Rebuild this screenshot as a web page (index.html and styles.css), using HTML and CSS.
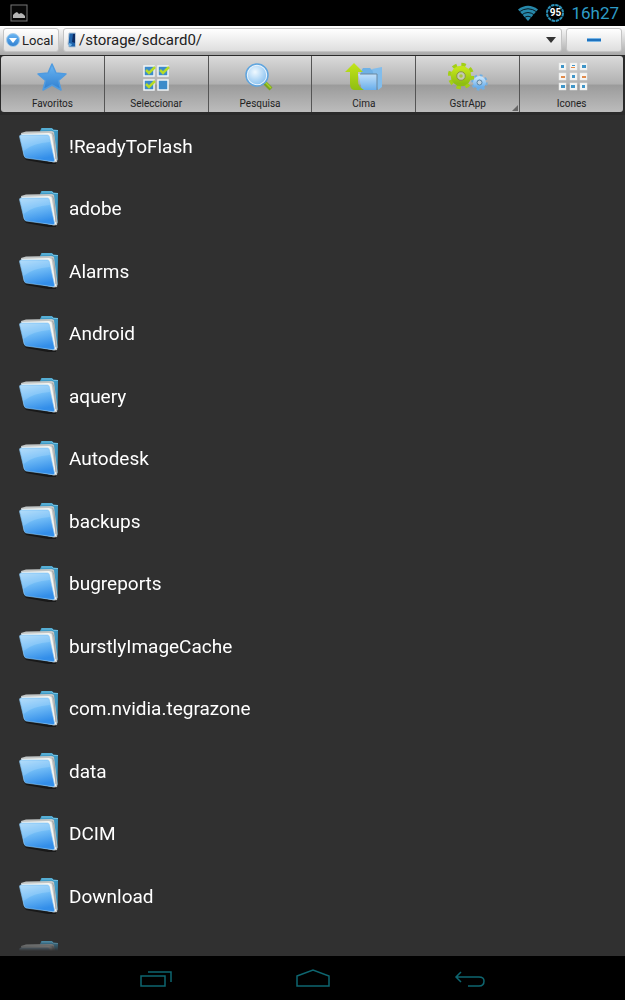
FILE: index.html
```
<!DOCTYPE html>
<html lang="pt">
<head>
  <meta charset="UTF-8">
  <meta name="viewport" content="width=device-width, initial-scale=1">
  <title>/storage/sdcard0/</title>
  <link rel="stylesheet" href="styles.css">
</head>
<body>

  <!-- shared gradients and the folder icon -->
  <svg class="defs" width="0" height="0" aria-hidden="true">
    <defs>
      <linearGradient id="blue" x1="0" y1="0" x2="0" y2="1">
        <stop offset="0" stop-color="#6bb6f3"/>
        <stop offset="1" stop-color="#2f7fd0"/>
      </linearGradient>
      <linearGradient id="light" x1="0" y1="0" x2="0" y2="1">
        <stop offset="0" stop-color="#c3e1fa"/>
        <stop offset="1" stop-color="#69aeeb"/>
      </linearGradient>
      <linearGradient id="green" x1="0" y1="0" x2="0" y2="1">
        <stop offset="0" stop-color="#c3e51a"/>
        <stop offset="1" stop-color="#8fbe12"/>
      </linearGradient>
      <linearGradient id="front" x1="0" y1="0" x2="0.3" y2="1">
        <stop offset="0" stop-color="#a9d8fa"/>
        <stop offset="0.45" stop-color="#74bef7"/>
        <stop offset="1" stop-color="#338ee9"/>
      </linearGradient>
      <radialGradient id="lens" cx="0.4" cy="0.35" r="0.7">
        <stop offset="0" stop-color="#f0f9ff"/>
        <stop offset="1" stop-color="#86c0f0"/>
      </radialGradient>
    </defs>
    <symbol id="folder" viewBox="0 0 42 38">
      <path d="M5 29 L38 35 L38 37 L30 37 L8 33z" fill="#181818"/>
      <path d="M22 4 L23.500 1 L34 1 L35.500 2.500 L40 3 L39.500 33 L34 33z" fill="#3f9bc6"/>
      <path d="M23.500 2 H34 L35.500 3.500 H40" fill="none" stroke="#6fc0e2"/>
      <path d="M3 6 L8 4.500 L34 4 L36 5 L39.500 32 L39 35 L36 35.500 L6 29z" fill="#c2c6c6"/>
      <path d="M3 7 L31 6 L33.500 7 L38 34 L35 34.500z" fill="#f6f6f2"/>
      <path d="M34.500 6 L36 10 L38 32" fill="none" stroke="#a5a5a5"/>
      <path d="M1.500 9.500 Q1.500 8 3 8 L29.500 8 Q31 8 31.300 9.500 L36.500 33 Q36.500 35 35 34.700 L8 31 Q6.500 30.500 6.200 29z" fill="url(#front)" stroke="#8ccaf6" stroke-width="0.6"/>
      <path d="M2.500 9 L30.500 9 L32 15 Q15 16 5.500 24z" fill="#fff" opacity="0.14"/>
    </symbol>
  </svg>

  <div class="screen">
    <header class="status">
      <svg width="18" height="18" viewBox="0 0 18 18" aria-hidden="true">
        <rect x="1" y="1" width="16" height="16" fill="#080808" stroke="#777"/>
        <path d="M3 14 V11 L5 9 L7 8 L9 10 L11 9 L13 10 L15 12 V14z" fill="#b5b5b5"/>
      </svg>
      <div class="status-right">
        <svg width="22" height="18" viewBox="0 0 22 18" aria-hidden="true">
          <path d="M1 5.500 Q11 -2 21 5.500 L11 17z" fill="#2788aa"/>
          <path d="M2 8 Q11 1.500 20 8 M4.500 11 Q11 6 17.500 11 M7 14 Q11 10.500 15 14" fill="none" stroke="#041015" stroke-width="0.9"/>
        </svg>
        <span class="battery">
          <svg class="battery-ring" width="20" height="20" viewBox="0 0 20 20" aria-hidden="true">
            <circle cx="10" cy="10" r="8" fill="none" stroke="#2b93bb" stroke-width="2" stroke-dasharray="3.400 0.790"/>
          </svg>
          95
        </span>
        <span class="clock">16h27</span>
      </div>
    </header>

    <div class="pathbar">
      <button class="local" type="button">
        <svg width="14" height="14" viewBox="0 0 14 14" aria-hidden="true">
          <circle cx="7" cy="7" r="6.500" fill="url(#blue)" stroke="#a7cdea"/>
          <path d="M3 5 H11 L7 10z" fill="#fff"/>
        </svg>
        Local
      </button>
      <button class="path" type="button">
        <svg width="10" height="16" viewBox="0 0 10 16" aria-hidden="true">
          <path d="M2 1 H8.500 V15 H2 L1 12z" fill="#1f63ab" stroke="#b9c9d8"/>
          <path d="M6 2 H8 V11 L5 10z" fill="#0c2b63"/>
          <path d="M2 11 L5 12 L4 14 H2z" fill="#69b2e8"/>
        </svg>
        <span class="path-text">/storage/sdcard0/</span>
        <svg width="10" height="7" viewBox="0 0 10 7" aria-hidden="true"><path d="M0 0 H10 L5 6z" fill="#333"/></svg>
      </button>
      <button class="minus" type="button" aria-label="Menos">
        <svg width="14" height="4" viewBox="0 0 14 4" aria-hidden="true">
          <rect width="14" height="4" fill="#79b6e6"/>
          <rect y="1" width="14" height="2" fill="#1f72bd"/>
        </svg>
      </button>
    </div>

    <nav class="toolbar">
      <button type="button">
        <svg class="tool-icon" viewBox="0 0 36 32" aria-hidden="true">
          <path d="M18 2 L22 11 L32 12 L24.500 18.500 L27 28 L18 23 L9 28 L11.500 18.500 L4 12 L14 11z" fill="url(#blue)" stroke="#4f9be0" stroke-width="1.500" stroke-linejoin="round"/>
        </svg>
        Favoritos
      </button>
      <button type="button">
        <svg class="tool-icon" viewBox="0 0 36 32" aria-hidden="true">
          <g fill="#3c8bca" stroke="#f1f5f7" stroke-width="1.500">
            <rect x="6" y="4" width="10" height="10"/>
            <rect x="20" y="4" width="10" height="10"/>
            <rect x="6" y="18" width="10" height="10"/>
            <rect x="20" y="18" width="10" height="10"/>
          </g>
          <path d="M8 8 L11 11 L17 5 M22 8 L25 11 L31 5 M8 22 L11 25 L17 19" fill="none" stroke="#b5db27" stroke-width="2.500"/>
        </svg>
        Seleccionar
      </button>
      <button type="button">
        <svg class="tool-icon" viewBox="0 0 36 32" aria-hidden="true">
          <path d="M21 19 L29 27" stroke="#7aa51c" stroke-width="4"/>
          <path d="M22 19 L29 26" stroke="#a7cf2c" stroke-width="1.500"/>
          <circle cx="15" cy="13" r="10" fill="url(#lens)" stroke="#eaf5fd" stroke-width="1.500"/>
          <circle cx="15" cy="13" r="11" fill="none" stroke="#5fa5df" stroke-width="1.500"/>
        </svg>
        Pesquisa
      </button>
      <button type="button">
        <svg class="tool-icon tool-icon-wide" viewBox="0 0 40 32" aria-hidden="true">
          <path d="M17 9 L19 6 H26 L28 8 H36 V24 H17z" fill="#6fb1e6"/>
          <path d="M28 7 L38 5 V25 L34 28z" fill="#82bdec"/>
          <path d="M14 12 H33 V28 H18z" fill="url(#light)"/>
          <path d="M16 12 H33 V28" fill="none" stroke="#69879f"/>
          <path d="M10 1 L19 10 H14 V19 Q14 25 20 28 H11 Q6 28 6 22 V10 H1z" fill="url(#green)"/>
        </svg>
        Cima
      </button>
      <button class="has-menu" type="button">
        <svg class="tool-icon tool-icon-wide" viewBox="0 0 40 32" aria-hidden="true">
          <circle cx="13" cy="14" r="11.500" fill="none" stroke="#a3cf16" stroke-width="3.500" stroke-dasharray="4.500 4.530"/>
          <circle cx="13" cy="14" r="7.300" fill="none" stroke="url(#green)" stroke-width="6"/>
          <circle cx="13" cy="14" r="4.300" fill="#c4c9b4" stroke="#8a963f"/>
          <circle cx="13" cy="14" r="1.800" fill="#a7c83c"/>
          <circle cx="31.500" cy="20.500" r="7" fill="none" stroke="#70aee2" stroke-width="2.500" stroke-dasharray="2.750 2.750"/>
          <circle cx="31.500" cy="20.500" r="4.500" fill="none" stroke="url(#light)" stroke-width="4"/>
          <circle cx="31.500" cy="20.500" r="2.500" fill="#c3d2de" stroke="#5986a8"/>
        </svg>
        GstrApp
      </button>
      <button type="button">
        <svg class="tool-icon" viewBox="0 0 36 32" aria-hidden="true">
          <g fill="#f6f6f4" stroke="#e3e6e8" stroke-width="0.5">
            <rect x="5" y="1" width="7" height="7"/><rect x="16" y="1" width="7" height="7"/><rect x="26" y="1" width="7" height="7"/>
            <rect x="5" y="11" width="7" height="7"/><rect x="16" y="11" width="7" height="7"/><rect x="26" y="11" width="7" height="7"/>
            <rect x="5" y="21" width="7" height="7"/><rect x="16" y="21" width="7" height="7"/><rect x="26" y="21" width="7" height="7"/>
          </g>
          <g fill="#3f95c8">
            <rect x="7" y="3" width="3" height="3"/><rect x="18" y="3" width="3" height="1"/><rect x="28" y="3" width="4" height="3"/>
            <rect x="18" y="13" width="3" height="3"/><rect x="7" y="23" width="4" height="3"/><rect x="17" y="23" width="4" height="3"/><rect x="28" y="23" width="3" height="3"/>
          </g>
          <g fill="#e08a4c">
            <rect x="17" y="5" width="4" height="1"/><rect x="7" y="14" width="4" height="2"/><rect x="28" y="14" width="4" height="2"/>
          </g>
        </svg>
        Icones
      </button>
    </nav>

    <main class="files">
      <ul>
        <li><svg class="folder"><use href="#folder"/></svg>!ReadyToFlash</li>
        <li><svg class="folder"><use href="#folder"/></svg>adobe</li>
        <li><svg class="folder"><use href="#folder"/></svg>Alarms</li>
        <li><svg class="folder"><use href="#folder"/></svg>Android</li>
        <li><svg class="folder"><use href="#folder"/></svg>aquery</li>
        <li><svg class="folder"><use href="#folder"/></svg>Autodesk</li>
        <li><svg class="folder"><use href="#folder"/></svg>backups</li>
        <li><svg class="folder"><use href="#folder"/></svg>bugreports</li>
        <li><svg class="folder"><use href="#folder"/></svg>burstlyImageCache</li>
        <li><svg class="folder"><use href="#folder"/></svg>com.nvidia.tegrazone</li>
        <li><svg class="folder"><use href="#folder"/></svg>data</li>
        <li><svg class="folder"><use href="#folder"/></svg>DCIM</li>
        <li><svg class="folder"><use href="#folder"/></svg>Download</li>
        <li><svg class="folder"><use href="#folder"/></svg></li>
      </ul>
    </main>

    <footer class="navbar">
      <button type="button" aria-label="Recentes">
        <svg width="32" height="18" viewBox="0 0 32 18"><path d="M1 7 H25 V17 H1z M8 3 H31 V13"/></svg>
      </button>
      <button type="button" aria-label="Início">
        <svg width="34" height="18" viewBox="0 0 34 18"><path d="M1 7 L17 1 L33 7 V17 H1z"/></svg>
      </button>
      <button type="button" aria-label="Voltar">
        <svg width="32" height="18" viewBox="0 0 32 18"><path d="M2 8 H25 Q30 8 30 12 Q30 17 25 17 H14 M7 3 L2 8 L7 13"/></svg>
      </button>
    </footer>
  </div>

</body>
</html>
```
FILE: styles.css
```
* {
  box-sizing: border-box;
}
body {
  margin: 0;
  background-color: #303030;
  font-family: Roboto, sans-serif;
  color: #fff;
}
button {
  font-family: inherit;
  color: #222;
  border: none;
  padding: 0;
  cursor: pointer;
}
svg {
  display: block;
  flex-shrink: 0;
}
.defs {
  position: absolute;
}
.screen {
  display: flex;
  flex-direction: column;
  height: 100vh;
}

/* status bar */
.status {
  display: flex;
  align-items: center;
  justify-content: space-between;
  height: 26px;
  padding: 0 6px 0 10px;
  background-color: #000;
}
.status-right {
  display: flex;
  align-items: center;
  gap: 6px;
}
.battery {
  position: relative;
  width: 20px;
  font-size: 10px;
  font-weight: bold;
  line-height: 20px;
  text-align: center;
}
.battery-ring {
  position: absolute;
  top: 0;
  left: 0;
}
.clock {
  color: #2e9cc6;
  font-size: 17px;
}

/* path bar */
.pathbar {
  display: flex;
  gap: 4px;
  height: 29px;
  padding: 2px 3px;
  background: linear-gradient(#fff, #a8a8a8);
}
.pathbar button {
  display: flex;
  align-items: center;
  height: 24px;
  background: linear-gradient(#fff, #dedede);
  border: 1px solid #c4c4c4;
  border-radius: 3px;
}
.pathbar .local {
  gap: 2px;
  width: 56px;
  padding-left: 2px;
  font-size: 13px;
}
.pathbar .path {
  flex: 1;
  gap: 2px;
  padding: 0 5px 0 3px;
  font-size: 15px;
}
.path-text {
  flex: 1;
  text-align: left;
}
.pathbar .minus {
  justify-content: center;
  width: 56px;
}

/* toolbar */
.toolbar {
  display: flex;
  height: 60px;
  padding: 1px 2px 3px 1px;
  background-color: #2a2a2a;
}
.toolbar button {
  flex: 1;
  display: flex;
  flex-direction: column;
  align-items: center;
  padding-top: 6px;
  font-size: 10px;
  line-height: 12px;
  background: linear-gradient(#dadada, #b0b0b0 50%, #9b9b9b 52%, #bcbcbc);
  border-right: 1px solid #555;
}
.toolbar button:first-child {
  border-radius: 3px 0 0 3px;
}
.toolbar button:last-child {
  border-right: none;
  border-radius: 0 3px 3px 0;
}
.tool-icon {
  width: 36px;
  height: 32px;
  margin-bottom: 4px;
}
.tool-icon-wide {
  width: 40px;
}
.has-menu {
  position: relative;
}
.has-menu::after {
  content: "";
  position: absolute;
  right: 1px;
  bottom: 1px;
  border: 3px solid #666;
  border-top-color: transparent;
  border-left-color: transparent;
}

/* file list */
.files {
  flex: 1;
  min-height: 0;
  margin-bottom: 5px;
  overflow: hidden;
  -webkit-mask-image: linear-gradient(to top, transparent, #000 14px);
  mask-image: linear-gradient(to top, transparent, #000 14px);
}
.files ul {
  margin: 0;
  padding: 0;
  list-style: none;
}
.files li {
  display: flex;
  align-items: center;
  gap: 9px;
  height: 62px;
  padding-left: 18px;
  font-size: 19px;
}
.files li:nth-child(even) {
  height: 63px;
}
.folder {
  width: 42px;
  height: 38px;
}

/* navigation bar */
.navbar {
  display: flex;
  justify-content: center;
  gap: 124px;
  height: 44px;
  background-color: #000;
}
.navbar button {
  display: flex;
  align-items: center;
  background: none;
}
.navbar path {
  fill: none;
  stroke: #0e6670;
  stroke-width: 1.5;
}
```
